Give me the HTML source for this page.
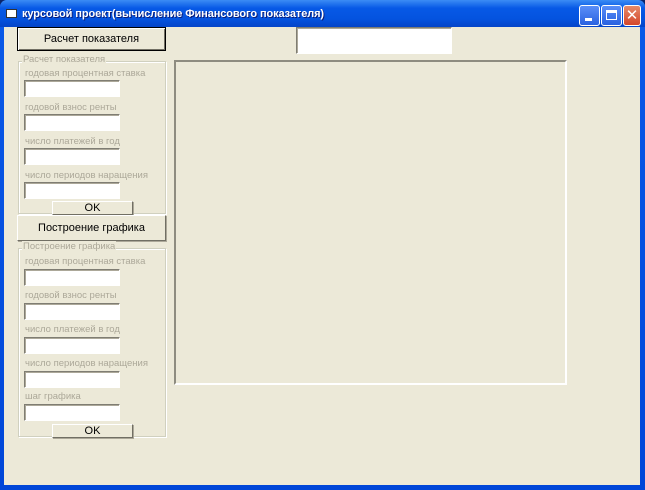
<!DOCTYPE html>
<html><head><meta charset="utf-8">
<style>
*{margin:0;padding:0;box-sizing:border-box}
body{width:645px;height:490px;overflow:hidden;background:#0a246a;font-family:"Liberation Sans","DejaVu Sans",sans-serif;font-size:11px;position:relative}
.win{position:absolute;left:0;top:0;width:645px;height:490px;background:linear-gradient(#0a5ae8,#0046d8);border-radius:7px 7px 0 0}
.title{position:absolute;left:0;top:0;width:645px;height:27px;background:linear-gradient(#3b8cf5,#0759e6 30%,#0453df 70%,#0444c8);border-radius:7px 7px 0 0}
.title span{position:absolute;left:22px;top:8px;color:#fff;font-weight:bold;font-size:11px;font-family:"Liberation Sans","DejaVu Sans",sans-serif;text-shadow:1px 1px #0a1e7a;letter-spacing:-0.1px}
.ico{position:absolute;left:6px;top:9px;width:11px;height:9px;background:#fff;border:1px solid #333}
.tb{position:absolute;top:5px;width:21px;height:21px;border:1px solid #fff;border-radius:3px;background:linear-gradient(#5a8ef8,#2a62e0)}
.cl{background:linear-gradient(#e58a6a,#d4462a)}
.client{position:absolute;left:4px;top:27px;width:636px;height:458px;background:#ece9d8}
.a{position:absolute}
.btn{position:absolute;background:#ece9d8;border:1px solid;border-color:#fff #716f64 #716f64 #fff;box-shadow:1px 1px 0 #aca899;text-align:center;color:#000;font-size:11px}
.txt{position:absolute;background:#fff;border:1px solid;border-color:#7f7d73 #fff #fff #7f7d73;box-shadow:inset 1px 1px 0 #aca899}
.lab{position:absolute;color:#aca899;font-size:9.5px;font-family:"Liberation Sans","DejaVu Sans",sans-serif}
.fr{position:absolute;border:1px solid #d0d0bf;box-shadow:inset 1px 1px 0 #fff,1px 1px 0 #fff}
</style></head><body>
<div class="win"></div>
<div class="title"><div class="ico"></div><span>курсовой проект(вычисление Финансового показателя)</span>
<div class="tb" style="left:579px"><div style="position:absolute;left:5px;top:12px;width:7px;height:3px;background:#fff"></div></div>
<div class="tb" style="left:601px"><div style="position:absolute;left:4px;top:4px;width:11px;height:10px;border:1px solid #fff;border-top:3px solid #fff"></div></div>
<div class="tb cl" style="left:623px;width:18px"><div style="position:absolute;left:0;top:0;width:16px;height:19px;color:#fff;font-weight:bold;font-size:15px;line-height:19px;text-align:center">✕</div></div>
</div>
<div class="client"></div>

<div class="btn" style="left:17px;top:27px;width:149px;height:24px;border:1px solid #000;box-shadow:inset 1px 1px 0 #fff,inset -1px -1px 0 #716f64;line-height:22px">Расчет показателя</div>

<div class="fr" style="left:18px;top:61px;width:148px;height:153px"></div>
<div class="lab" style="left:22px;top:54px;background:#ece9d8;padding:0 1px">Расчет показателя</div>
<div class="lab" style="left:25px;top:68px">годовая процентная ставка</div>
<div class="txt" style="left:24px;top:80px;width:96px;height:17px"></div>
<div class="lab" style="left:25px;top:102px">годовой взнос ренты</div>
<div class="txt" style="left:24px;top:114px;width:96px;height:17px"></div>
<div class="lab" style="left:25px;top:136px">число платежей в год</div>
<div class="txt" style="left:24px;top:148px;width:96px;height:17px"></div>
<div class="lab" style="left:25px;top:170px">число периодов наращения</div>
<div class="txt" style="left:24px;top:182px;width:96px;height:17px"></div>
<div class="btn" style="left:52px;top:201px;width:81px;height:14px;line-height:13px">OK</div>

<div class="btn" style="left:17px;top:215px;width:149px;height:26px;line-height:25px">Построение графика</div>

<div class="fr" style="left:18px;top:248px;width:148px;height:189px"></div>
<div class="lab" style="left:22px;top:241px;background:#ece9d8;padding:0 1px">Построение графика</div>
<div class="lab" style="left:25px;top:256px">годовая процентная ставка</div>
<div class="txt" style="left:24px;top:269px;width:96px;height:17px"></div>
<div class="lab" style="left:25px;top:290px">годовой взнос ренты</div>
<div class="txt" style="left:24px;top:303px;width:96px;height:17px"></div>
<div class="lab" style="left:25px;top:324px">число платежей в год</div>
<div class="txt" style="left:24px;top:337px;width:96px;height:17px"></div>
<div class="lab" style="left:25px;top:358px">число периодов наращения</div>
<div class="txt" style="left:24px;top:371px;width:96px;height:17px"></div>
<div class="lab" style="left:25px;top:391px">шаг графика</div>
<div class="txt" style="left:24px;top:404px;width:96px;height:17px"></div>
<div class="btn" style="left:52px;top:424px;width:81px;height:14px;line-height:13px">OK</div>

<div class="a" style="left:174px;top:60px;width:393px;height:325px;border:2px solid;border-color:#8e8c80 #fff #fff #8e8c80;background:#ece9d8"></div>
<div class="txt" style="left:296px;top:27px;width:156px;height:27px"></div>
</body></html>
